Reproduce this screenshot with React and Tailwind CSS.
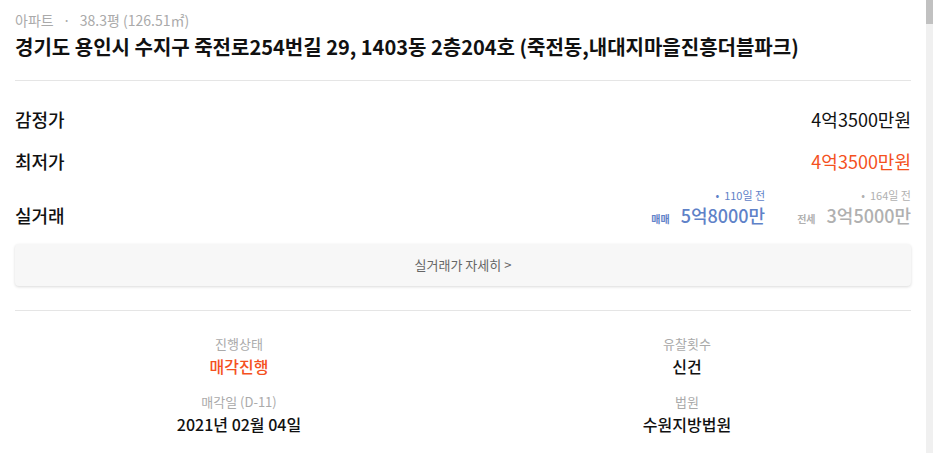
const font = { fontFamily: '"Noto Sans CJK KR", "Noto Sans", sans-serif' };

const InfoCell = ({ label, value, valueClass }) => (
  <div className="flex flex-col items-center">
    <span className="text-[13px] leading-[18px] text-[#aaaaaa]">{label}</span>
    <span className={`mt-[2px] text-[16px] leading-[22px] font-medium ${valueClass}`}>{value}</span>
  </div>
);

const Deal = ({ ago, type, price, color }) => (
  <div className="flex flex-col items-end">
    <span className={`text-[11px] leading-[14px] ${color}`}>•&nbsp; {ago}</span>
    <div className="flex items-baseline gap-[11px]">
      <span className={`text-[10px] font-bold ${color}`}>{type}</span>
      <span className={`text-[18px] leading-[26px] font-medium ${color}`}>{price}</span>
    </div>
  </div>
);

export default function App() {
  return (
    <div style={font} className="flex h-[453px] overflow-hidden bg-white text-[#111]">
      <main className="flex-1 px-[15px] pt-[10px]">
        <div className="text-[14px] leading-[20px] text-[#aaaaaa]">
          아파트 <span className="mx-[6px]">·</span> 38.3평 (126.51㎡)
        </div>
        <h1 className="mt-[3px] text-[20px] leading-[28px] font-bold">
          경기도 용인시 수지구 죽전로254번길 29, 1403동 2층204호 (죽전동,내대지마을진흥더블파크)
        </h1>

        <div className="mt-[19px] border-t border-[#e5e5e5]" />

        <div className="mt-[26px] flex justify-between text-[18px] leading-[24px]">
          <span className="font-medium">감정가</span>
          <span>4억3500만원</span>
        </div>
        <div className="mt-[18px] flex justify-between text-[18px] leading-[24px]">
          <span className="font-medium">최저가</span>
          <span className="text-[#f4511e]">4억3500만원</span>
        </div>
        <div className="mt-[15px] flex items-end justify-between">
          <span className="text-[18px] leading-[26px] font-medium">실거래</span>
          <div className="flex gap-[32px]">
            <Deal ago="110일 전" type="매매" price="5억8000만" color="text-[#5f82c8]" />
            <Deal ago="164일 전" type="전세" price="3억5000만" color="text-[#b0b0b0]" />
          </div>
        </div>

        <button className="mt-[16px] flex h-[42px] w-full items-center justify-center rounded-[4px] bg-[#f7f7f7] text-[13px] text-[#666] shadow-[0_1px_3px_rgba(0,0,0,0.15)]">
          실거래가 자세히 &gt;
        </button>

        <div className="mt-[24px] border-t border-[#e5e5e5]" />

        <div className="mt-[24px] grid grid-cols-2 gap-y-[16px]">
          <InfoCell label="진행상태" value="매각진행" valueClass="text-[#f4511e]" />
          <InfoCell label="유찰횟수" value="신건" valueClass="text-[#111]" />
          <InfoCell label="매각일 (D-11)" value="2021년 02월 04일" valueClass="text-[#111]" />
          <InfoCell label="법원" value="수원지방법원" valueClass="text-[#111]" />
        </div>
      </main>

      <aside className="w-[7px] shrink-0 bg-[#f0f0f0]">
        <div className="h-[24px] bg-[#c1c1c1]" />
      </aside>
    </div>
  );
}
